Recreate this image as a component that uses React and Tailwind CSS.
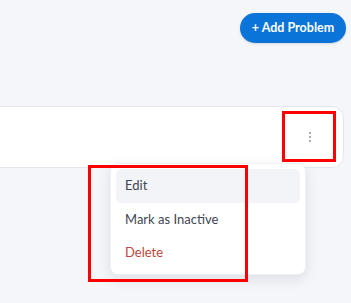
import React from 'react';

const App = () => {
  return (
    <div
      className="relative w-[351px] h-[303px] overflow-hidden bg-[#f4f6fa]"
      style={{ fontFamily: 'Lato, "Open Sans", sans-serif' }}
    >
      {/* Header */}
      <div className="flex justify-end pt-[13px] pr-[5px]">
        <button className="h-[30px] w-[106px] rounded-full bg-[#0b74d8] text-white text-[12.5px] font-bold shadow-sm">
          + Add Problem
        </button>
      </div>

      {/* Problem card */}
      <div className="mt-[63px] ml-[-12px] mr-[7px] h-[62px] rounded-xl border border-[#e4e7ee] bg-white flex items-center justify-end pr-[28px]">
        <button className="flex flex-col items-center gap-[2px] p-1">
          <span className="block h-[2px] w-[2px] rounded-full bg-[#8a909c]" />
          <span className="block h-[2px] w-[2px] rounded-full bg-[#8a909c]" />
          <span className="block h-[2px] w-[2px] rounded-full bg-[#8a909c]" />
        </button>
      </div>

      {/* Dropdown menu */}
      <div className="absolute left-[110px] top-[163px] w-[196px] rounded-lg bg-white p-[5px] shadow-[0_4px_14px_rgba(15,23,42,0.10)] border border-[#eef0f4]">
        <div className="h-[34px] flex items-center px-[9px] rounded-md bg-[#f3f4f8] text-[13px] text-[#3f4654]">
          Edit
        </div>
        <div className="h-[33px] flex items-center px-[9px] text-[13px] text-[#3f4654]">
          Mark as Inactive
        </div>
        <div className="h-[33px] flex items-center px-[9px] text-[13px] text-[#bd4540]">
          Delete
        </div>
      </div>

      {/* Annotation boxes */}
      <div className="absolute left-[282px] top-[111px] w-[54px] h-[51px] border-[3px] border-[#ff0000]" />
      <div className="absolute left-[88px] top-[165px] w-[160px] h-[117px] border-[3px] border-[#ff0000]" />
    </div>
  );
};

export default App;
